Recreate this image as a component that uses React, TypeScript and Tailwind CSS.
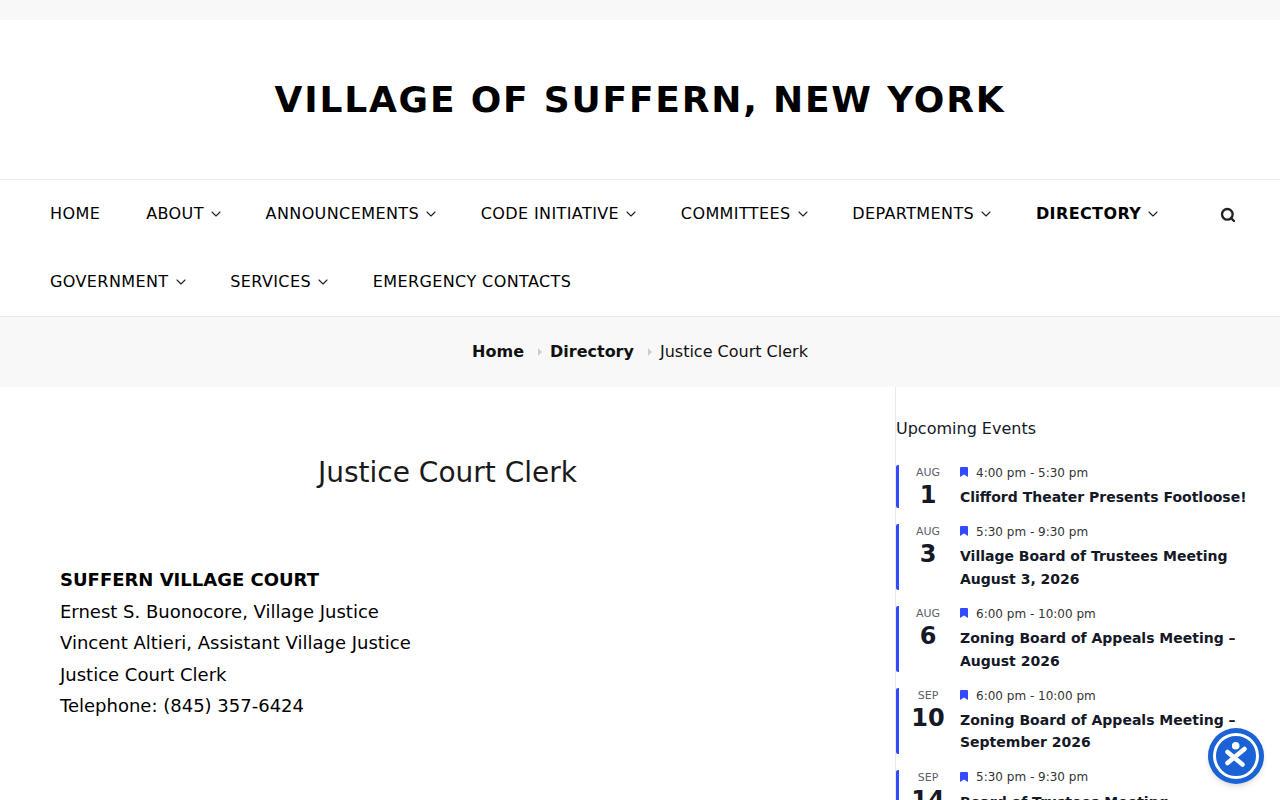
import { ChevronDown, Search } from 'lucide-react';

const row1 = [
  { label: 'HOME', w: 'mr-[46px]' },
  { label: 'ABOUT', sub: true, w: 'mr-[41.7px]' },
  { label: 'ANNOUNCEMENTS', sub: true, w: 'mr-[41.7px]' },
  { label: 'CODE INITIATIVE', sub: true, w: 'mr-[41.7px]' },
  { label: 'COMMITTEES', sub: true, w: 'mr-[41.7px]' },
  { label: 'DEPARTMENTS', sub: true, w: 'mr-[41.7px]' },
  { label: 'DIRECTORY', sub: true, bold: true, w: '' },
];

const row2 = [
  { label: 'GOVERNMENT', sub: true, w: 'mr-[41.7px]' },
  { label: 'SERVICES', sub: true, w: 'mr-[41.7px]' },
  { label: 'EMERGENCY CONTACTS', w: '' },
];

const events = [
  { mon: 'AUG', day: '1', time: '4:00 pm - 5:30 pm', title: ['Clifford Theater Presents Footloose!'] },
  { mon: 'AUG', day: '3', time: '5:30 pm - 9:30 pm', title: ['Village Board of Trustees Meeting', 'August 3, 2026'] },
  { mon: 'AUG', day: '6', time: '6:00 pm - 10:00 pm', title: ['Zoning Board of Appeals Meeting –', 'August 2026'] },
  { mon: 'SEP', day: '10', time: '6:00 pm - 10:00 pm', title: ['Zoning Board of Appeals Meeting –', 'September 2026'] },
  { mon: 'SEP', day: '14', time: '5:30 pm - 9:30 pm', title: ['Board of Trustees Meeting', 'September 14, 2026'] },
];

function NavItem({ label, sub, bold, w }: { label: string; sub?: boolean; bold?: boolean; w: string }) {
  return (
    <a className={`flex items-center tracking-[0.4px] ${bold ? 'font-bold' : ''} ${w}`}>
      {label}
      {sub && <ChevronDown className="ml-[4px] h-[16px] w-[16px] text-[#222]" strokeWidth={1.6} />}
    </a>
  );
}

function AccessWidget() {
  return (
    <div className="absolute bottom-[16px] right-[16px] flex h-[56px] w-[56px] items-center justify-center rounded-full bg-[#1a62d6] shadow-md">
      <div className="flex h-[46px] w-[46px] items-center justify-center rounded-full border-[3px] border-white">
        <svg viewBox="0 0 32 32" className="h-[32px] w-[32px]">
          <circle cx="15.7" cy="5.7" r="3.8" fill="#fff" />
          <path d="M7.5 23L24.5 9M7.5 12L22.5 24.5" stroke="#fff" strokeWidth="4.5" strokeLinecap="round" />
        </svg>
      </div>
    </div>
  );
}

export default function App() {
  return (
    <div className="relative h-[800px] overflow-hidden bg-white font-['DejaVu_Sans',sans-serif] text-[#111]">
      <div className="h-[20px] bg-[#f8f8f8]" />

      <header className="flex h-[160px] items-center justify-center border-b border-[#eaeaea]">
        <h1 className="text-[36px] font-bold tracking-[1.8px] text-black">VILLAGE OF SUFFERN, NEW YORK</h1>
      </header>

      <nav className="border-b border-[#eaeaea] px-[50px] text-[16px] text-black">
        <div className="flex h-[68px] items-center">
          {row1.map(i => <NavItem key={i.label} {...i} />)}
          <Search className="ml-auto mr-[-6px] mt-[1px] h-[16px] w-[16px] text-[#222]" strokeWidth={3.5} />
        </div>
        <div className="flex h-[68px] items-center">
          {row2.map(i => <NavItem key={i.label} {...i} />)}
        </div>
      </nav>

      <div className="flex h-[70px] items-center justify-center bg-[#f8f8f8] text-[16px] text-[#111]">
        <span className="font-bold">Home</span>
        <span className="ml-[14px] mr-[8px] h-0 w-0 border-y-[4px] border-l-[4px] border-y-transparent border-l-[#ccc]" />
        <span className="font-bold">Directory</span>
        <span className="ml-[14px] mr-[8px] h-0 w-0 border-y-[4px] border-l-[4px] border-y-transparent border-l-[#ccc]" />
        <span>Justice Court Clerk</span>
      </div>

      <div className="flex">
        <main className="w-[895px] shrink-0 px-[60px]">
          <h2 className="mt-[65px] text-center text-[28px] leading-[42px] text-[#1a1a1a]">Justice Court Clerk</h2>
          <div className="mt-[70px] text-[18px] leading-[31.5px] text-black">
            <div className="font-bold">SUFFERN VILLAGE COURT</div>
            <div>Ernest S. Buonocore, Village Justice</div>
            <div>Vincent Altieri, Assistant Village Justice</div>
            <div>Justice Court Clerk</div>
            <div>Telephone: (845) 357-6424</div>
          </div>
        </main>

        <aside className="h-[500px] flex-1 border-l border-[#eaeaea]">
          <h3 className="mt-[30px] text-[16px] leading-[24px] text-[#141827]">Upcoming Events</h3>
          <div className="mt-[24px] flex flex-col gap-[16px]">
            {events.map(e => (
              <div key={e.title[0]} className="flex">
                <div className="flex w-[64px] shrink-0 flex-col items-center rounded-[2px] border-l-[3px] border-[#334aff] pr-[3px] text-[#141827]">
                  <span className="mt-[1px] text-[11px] leading-[14px] text-[#5d5f6b]">{e.mon}</span>
                  <span className="-mb-[2px] text-[24px] font-bold leading-[30px]">{e.day}</span>
                </div>
                <div>
                  <div className="flex h-[16px] items-center text-[12px] leading-[15px] text-[#333]">
                    <svg viewBox="0 0 8 10" className="-mt-[2px] mr-[8px] h-[10px] w-[8px] fill-[#334aff]">
                      <path d="M0 1a1 1 0 0 1 1-1h6a1 1 0 0 1 1 1v9L4 7.5 0 10z" />
                    </svg>
                    {e.time}
                  </div>
                  <div className="mt-[5px] text-[14px] font-bold leading-[22.4px] text-[#141827]">
                    {e.title.map(t => <div key={t}>{t}</div>)}
                  </div>
                </div>
              </div>
            ))}
          </div>
        </aside>
      </div>

      <AccessWidget />
    </div>
  );
}
